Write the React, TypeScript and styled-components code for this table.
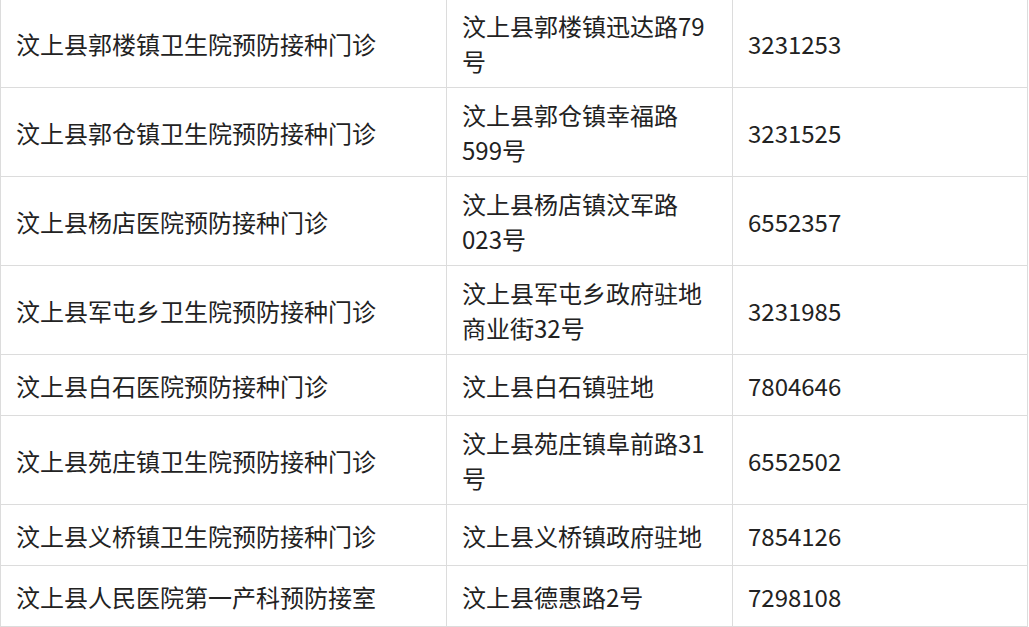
import styled, { createGlobalStyle } from "styled-components";

const GlobalStyle = createGlobalStyle`
    html, body {
        margin: 0;
        padding: 0;
        background: #ffffff;
    }
    body {
        font-family: "Noto Sans CJK SC", "Noto Sans", sans-serif;
        color: #222222;
    }
`

type Clinic = {
    name: string;
    address: string[];
    phone: string;
};

const clinics: Clinic[] = [
    { name: "汶上县郭楼镇卫生院预防接种门诊", address: ["汶上县郭楼镇迅达路79", "号"], phone: "3231253" },
    { name: "汶上县郭仓镇卫生院预防接种门诊", address: ["汶上县郭仓镇幸福路", "599号"], phone: "3231525" },
    { name: "汶上县杨店医院预防接种门诊", address: ["汶上县杨店镇汶军路", "023号"], phone: "6552357" },
    { name: "汶上县军屯乡卫生院预防接种门诊", address: ["汶上县军屯乡政府驻地", "商业街32号"], phone: "3231985" },
    { name: "汶上县白石医院预防接种门诊", address: ["汶上县白石镇驻地"], phone: "7804646" },
    { name: "汶上县苑庄镇卫生院预防接种门诊", address: ["汶上县苑庄镇阜前路31", "号"], phone: "6552502" },
    { name: "汶上县义桥镇卫生院预防接种门诊", address: ["汶上县义桥镇政府驻地"], phone: "7854126" },
    { name: "汶上县人民医院第一产科预防接室", address: ["汶上县德惠路2号"], phone: "7298108" },
];

function App() {
    return (
        <>
            <GlobalStyle />
            <Table>
                <colgroup>
                    <col style={{ width: 446 }} />
                    <col style={{ width: 286 }} />
                    <col />
                </colgroup>
                <tbody>
                    {clinics.map((c) => (
                        <Row key={c.name} $tall={c.address.length > 1}>
                            <Cell>{c.name}</Cell>
                            <Cell>
                                {c.address.map((line, i) => (
                                    <Line key={i}>{line}</Line>
                                ))}
                            </Cell>
                            <Cell>{c.phone}</Cell>
                        </Row>
                    ))}
                </tbody>
            </Table>
        </>
    );
}

const Table = styled.table`
    width: 1028px;
    margin-top: -2px;
    border-collapse: collapse;
    table-layout: fixed;
`

const Row = styled.tr<{ $tall: boolean }>`
    height: ${({ $tall }) => ($tall ? "89px" : "61px")};
`

const Cell = styled.td`
    border: 1px solid #dcdcdc;
    padding: 0 15px;
    font-size: 24px;
    line-height: 35px;
    vertical-align: middle;
    white-space: nowrap;
`

const Line = styled.div`
    display: block;
`

export default App;
